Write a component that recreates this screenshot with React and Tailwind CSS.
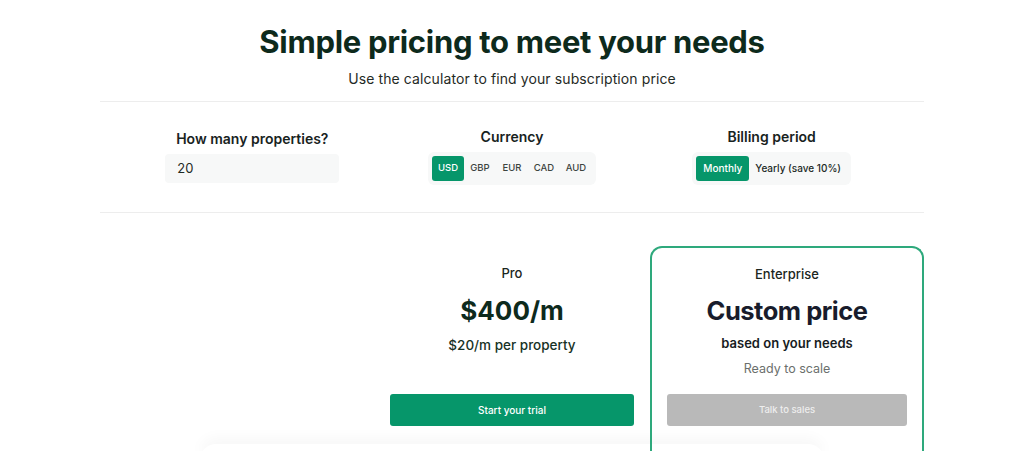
import React from "react";

const currencies = ["USD", "GBP", "EUR", "CAD", "AUD"];

const App = () => {
  return (
    <div className="min-h-[451px] bg-white font-['Inter',sans-serif] text-[#10291f] overflow-hidden">
      <div className="w-[824px] mx-auto">
        {/* Header */}
        <div className="text-center pt-[22px] pb-[12px]">
          <h1 className="text-[31px] leading-[40px] font-bold tracking-[-0.3px] text-[#0d2a1c]">
            Simple pricing to meet your needs
          </h1>
          <p className="mt-[7px] text-[14px] leading-[20px] tracking-[0.1px] text-[#1f2a25]">
            Use the calculator to find your subscription price
          </p>
        </div>

        {/* Calculator */}
        <div className="border-t border-b border-[#ededed] h-[112px] grid grid-cols-3">
          <div className="flex flex-col items-center pt-[27px] pl-[30px]">
            <div className="text-[14px] leading-[20px] font-semibold text-[#18231e]">How many properties?</div>
            <div className="mt-[5px] w-[174px] h-[29px] rounded-[4px] bg-[#f7f8f8] px-[12px] flex items-center text-[13px] text-[#1f2a25]">
              20
            </div>
          </div>
          <div className="flex flex-col items-center pt-[25px]">
            <div className="text-[14px] leading-[20px] font-semibold text-[#18231e]">Currency</div>
            <div className="mt-[5px] flex p-[4px] rounded-[6px] bg-[#f7f8f8]">
              {currencies.map((c, i) => (
                <div
                  key={c}
                  className={
                    i === 0
                      ? "w-[32px] h-[25px] rounded-[3px] bg-[#06966a] text-white text-[9.5px] font-medium flex items-center justify-center"
                      : "w-[32px] h-[25px] text-[#3c4440] text-[9.5px] font-medium flex items-center justify-center"
                  }
                >
                  {c}
                </div>
              ))}
            </div>
          </div>
          <div className="flex flex-col items-center pt-[25px] pr-[30px]">
            <div className="text-[14px] leading-[20px] font-semibold text-[#18231e]">Billing period</div>
            <div className="mt-[5px] flex p-[4px] rounded-[6px] bg-[#f7f8f8]">
              <div className="w-[53px] h-[25px] rounded-[3px] bg-[#06966a] text-white text-[10px] font-medium flex items-center justify-center">
                Monthly
              </div>
              <div className="px-[6px] h-[25px] text-[#222a26] text-[10px] font-medium flex items-center">
                Yearly (save 10%)
              </div>
            </div>
          </div>
        </div>

        {/* Plans */}
        <div className="grid grid-cols-3 gap-px mt-[33px]">
          <div></div>
          <div className="flex flex-col items-center pt-[17px] px-[15px]">
            <div className="text-[13px] leading-[20px] font-medium text-[#1b2621]">Pro</div>
            <div className="mt-[12px] text-[26px] leading-[32px] font-bold text-[#0d2a1c]">$400/m</div>
            <div className="mt-[8px] text-[13.5px] leading-[20px] font-medium text-[#173226]">$20/m per property</div>
            <button className="mt-[39px] w-full h-[32px] rounded-[3px] bg-[#06966a] text-white text-[10px] font-medium">
              Start your trial
            </button>
          </div>
          <div className="border-2 border-[#2ea97c] border-b-0 rounded-t-[12px] h-[210px] flex flex-col items-center pt-[16px] px-[15px]">
            <div className="text-[13px] leading-[20px] font-medium text-[#1b2621]">Enterprise</div>
            <div className="mt-[11px] text-[25.5px] leading-[32px] font-bold tracking-[-0.5px] text-[#181c2c]">Custom price</div>
            <div className="mt-[6px] text-[13px] leading-[20px] font-semibold text-[#171c22]">based on your needs</div>
            <div className="mt-[6px] text-[12.5px] leading-[20px] text-[#6b6f6d]">Ready to scale</div>
            <button className="mt-[15px] w-full h-[32px] rounded-[3px] bg-[#b9b9b9] text-[#eeeeee] text-[9.5px] font-medium">
              Talk to sales
            </button>
          </div>
        </div>
        <div className="-mt-[12px] mx-[100px] h-[16px] rounded-t-[20px] shadow-[0_-6px_14px_rgba(0,0,0,0.035)]"></div>
      </div>
    </div>
  );
};

export default App;
